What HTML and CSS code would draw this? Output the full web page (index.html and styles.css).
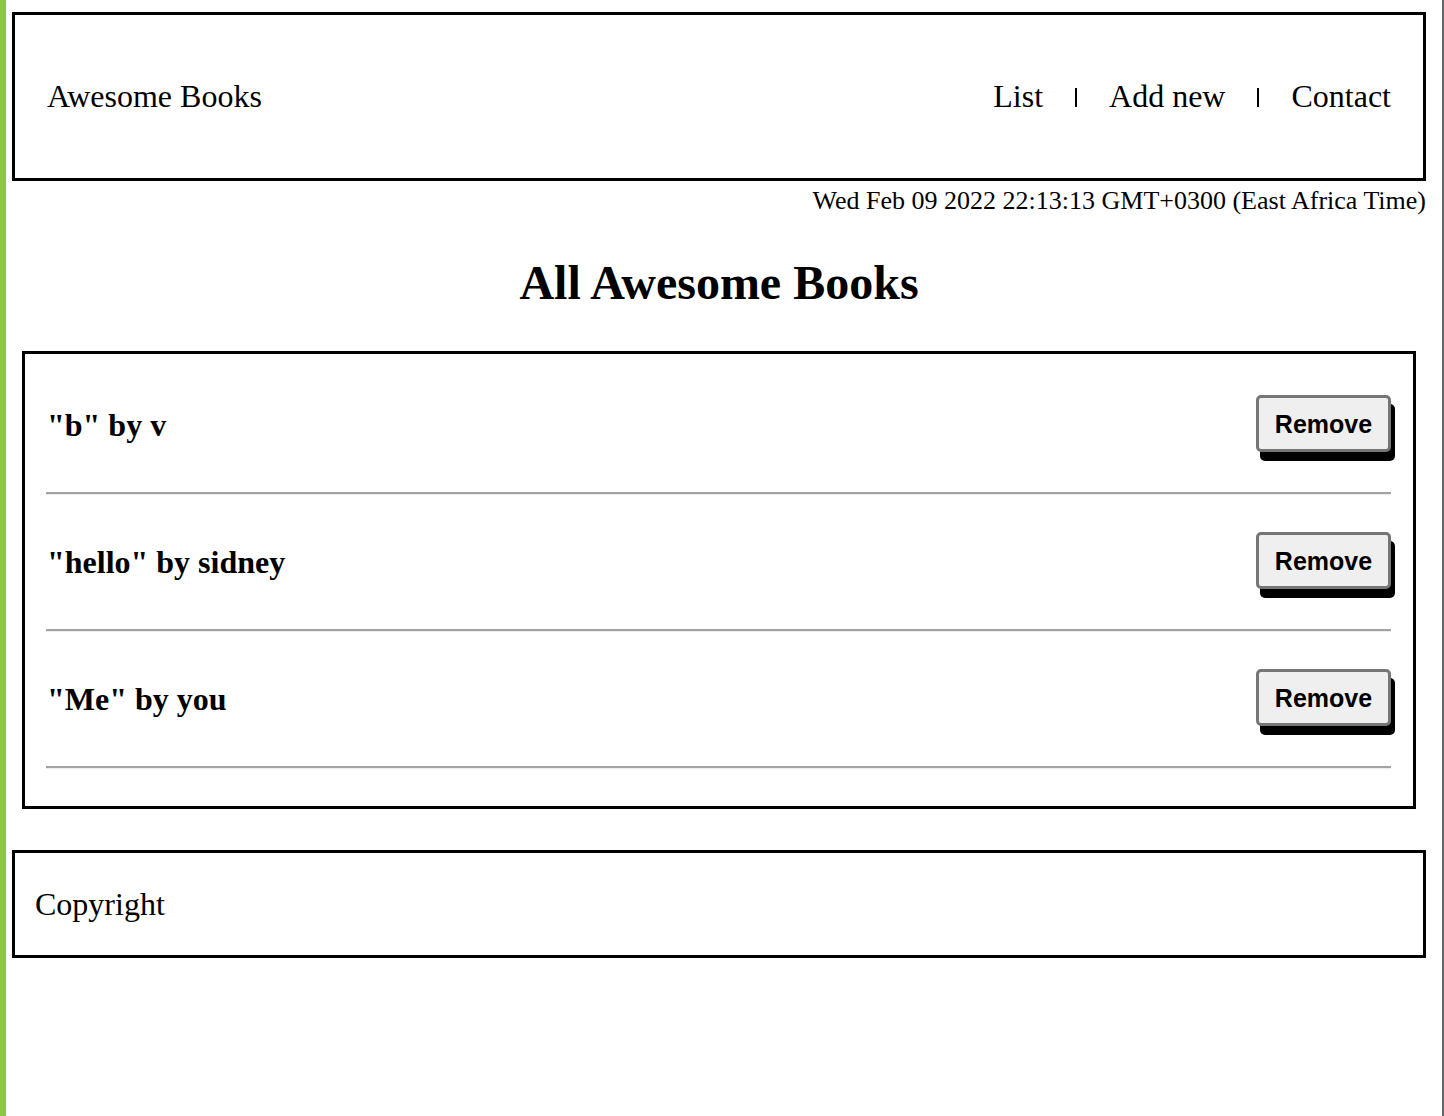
FILE: index.html
```html
<!DOCTYPE html>
<html lang="en">
<head>
<meta charset="utf-8">
<title>Awesome Books</title>
<link rel="stylesheet" href="styles.css">
</head>
<body>
  <header class="site-header">
    <span class="brand">Awesome Books</span>
    <nav class="nav">
      <a class="nav-link" href="#list">List</a>
      <span class="sep" aria-hidden="true"></span>
      <a class="nav-link" href="#add">Add new</a>
      <span class="sep" aria-hidden="true"></span>
      <a class="nav-link" href="#contact">Contact</a>
    </nav>
  </header>
  <p class="date">Wed Feb 09 2022 22:13:13 GMT+0300 (East Africa Time)</p>
  <h1 class="title">All Awesome Books</h1>
  <section class="books">
    <div class="book">
      <div class="book-row">
        <span class="book-name">"b" by v</span>
        <button class="remove">Remove</button>
      </div>
      <hr class="divider">
    </div>
    <div class="book">
      <div class="book-row">
        <span class="book-name">"hello" by sidney</span>
        <button class="remove">Remove</button>
      </div>
      <hr class="divider">
    </div>
    <div class="book">
      <div class="book-row">
        <span class="book-name">"Me" by you</span>
        <button class="remove">Remove</button>
      </div>
      <hr class="divider">
    </div>
  </section>
  <footer class="site-footer">Copyright</footer>
</body>
</html>
```
FILE: styles.css
```css
* { box-sizing: border-box; }
html, body { height: 100%; }
body {
  margin: 0;
  min-height: 100vh;
  border-left: 6px solid #8dc63f;
  border-right: 2px solid #5f6368;
  padding: 12px 16px 0 6px;
  font-family: "Liberation Serif", "Times New Roman", serif;
  color: #000;
  background: #fff;
}
.site-header {
  height: 169px;
  border: 3px solid #000;
  display: flex;
  align-items: center;
  justify-content: space-between;
  padding: 0 32px;
  font-size: 32px;
}
.nav { display: flex; align-items: baseline; }
.nav-link { color: #000; text-decoration: none; }
.sep {
  display: inline-block;
  width: 2px;
  height: 19px;
  background: #000;
  margin: 0 32px 0 32px;
}
.date {
  margin: 5px 0 0;
  text-align: right;
  font-size: 26px;
  line-height: 30px;
}
.title {
  margin: 39px 0 40px;
  text-align: center;
  font-size: 48px;
  line-height: 56px;
  font-weight: bold;
}
.books {
  margin: 0 10px;
  border: 3px solid #000;
  padding: 41px 22px 0 21px;
}
.book-row {
  display: flex;
  align-items: center;
  justify-content: space-between;
  height: 57px;
}
.book-name {
  font-size: 32px;
  font-weight: bold;
  padding-left: 1px;
  position: relative;
  top: 2px;
}
.remove {
  font-family: "Liberation Sans", Arial, sans-serif;
  font-weight: bold;
  font-size: 25px;
  line-height: 30px;
  height: 57px;
  width: 135px;
  padding: 0;
  background: #efefef;
  color: #000;
  border: 3px solid #767676;
  border-radius: 5px;
  box-shadow: 4px 9px 0 #000;
}
.divider {
  margin: 40px 0 37px;
  border: 0;
  border-top: 2px solid #a3a3a3;
  border-bottom: 1px solid #ececec;
  height: 0;
}
.site-footer {
  margin-top: 41px;
  height: 108px;
  border: 3px solid #000;
  display: flex;
  align-items: center;
  padding: 0 20px;
  font-size: 32px;
}
```
